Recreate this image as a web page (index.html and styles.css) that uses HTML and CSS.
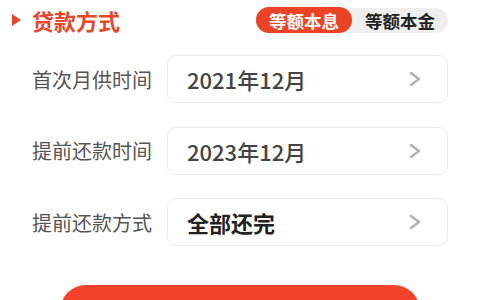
FILE: index.html
```html
<!DOCTYPE html>
<html lang="zh-CN">

<head>
     <meta charset="UTF-8">
     <meta name="viewport" content="width=device-width, initial-scale=1.0">
     <title>提前还款</title>
     <link rel="stylesheet" href="styles.css">
</head>

<body>
     <section class="panel">
          <header class="panel-head">
               <h2 class="title"><span class="arrow"></span>贷款方式</h2>
               <nav class="toggle">
                    <a class="toggle-item active" href="#">等额本息</a>
                    <a class="toggle-item" href="#">等额本金</a>
               </nav>
          </header>
          <div class="rows">
               <div class="row">
                    <label class="label">首次月供时间</label>
                    <div class="field">
                         <span class="value">2021年12月</span>
                         <svg class="chevron" viewBox="0 0 16 16"><path d="M4 2 L12 8 L4 14"/></svg>
                    </div>
               </div>
               <div class="row">
                    <label class="label">提前还款时间</label>
                    <div class="field">
                         <span class="value">2023年12月</span>
                         <svg class="chevron" viewBox="0 0 16 16"><path d="M4 2 L12 8 L4 14"/></svg>
                    </div>
               </div>
               <div class="row">
                    <label class="label">提前还款方式</label>
                    <div class="field">
                         <span class="value dark">全部还完</span>
                         <svg class="chevron" viewBox="0 0 16 16"><path d="M4 2 L12 8 L4 14"/></svg>
                    </div>
               </div>
          </div>
          <button class="submit" aria-label="计算"></button>
     </section>
</body>

</html>
```

FILE: styles.css
```css
html {
     box-sizing: border-box;
     font-family: "Noto Sans CJK SC", "Noto Sans", sans-serif;
     font-size: 16px;
}

*,
*:before,
*:after {
     box-sizing: inherit;
}

body {
     margin: 0;
     background-color: #fff;
}

.panel {
     padding: 0 32px 0 12px;
}

.panel-head {
     height: 40px;
     display: flex;
     justify-content: space-between;
     align-items: center;
}

.title {
     margin: 0;
     display: flex;
     align-items: center;
     font-size: 22px;
     font-weight: 700;
     color: #e4472b;
     line-height: 1;
}

.arrow {
     width: 0;
     height: 0;
     margin-right: 11px;
     border-top: 6.5px solid transparent;
     border-bottom: 6.5px solid transparent;
     border-left: 9px solid #e4472b;
}

.toggle {
     display: flex;
     background-color: #efefef;
     border-radius: 13px;
     height: 25px;
     align-items: center;
}

.toggle-item {
     height: 26px;
     padding: 0 13px;
     display: flex;
     align-items: center;
     font-size: 17.5px;
     font-weight: 700;
     color: #222;
     text-decoration: none;
     border-radius: 13px;
}

.toggle-item.active {
     background-color: #ea4326;
     color: #fff;
     width: 96px;
}

.rows {
     margin-top: 15px;
     display: flex;
     flex-direction: column;
     gap: 23.5px;
     padding-left: 20px;
}

.row {
     display: flex;
     align-items: center;
}

.label {
     width: 135px;
     font-size: 20px;
     color: #555;
}

.field {
     flex-grow: 1;
     height: 48px;
     display: flex;
     align-items: center;
     justify-content: space-between;
     padding: 0 24px 0 19px;
     border: 1px solid #f1ebe8;
     border-radius: 9px;
}

.value {
     font-size: 22px;
     font-weight: 500;
     color: #444;
}

.value.dark {
     font-weight: 700;
     color: #222;
}

.chevron {
     width: 16px;
     height: 16px;
     fill: none;
     stroke: #b3b3b3;
     stroke-width: 2.6;
     stroke-linecap: round;
     stroke-linejoin: round;
}

.submit {
     display: block;
     margin: 39px 28px 0 48px;
     width: calc(100% - 76px);
     height: 52px;
     border: none;
     border-radius: 26px;
     background-color: #f4432b;
}
```
